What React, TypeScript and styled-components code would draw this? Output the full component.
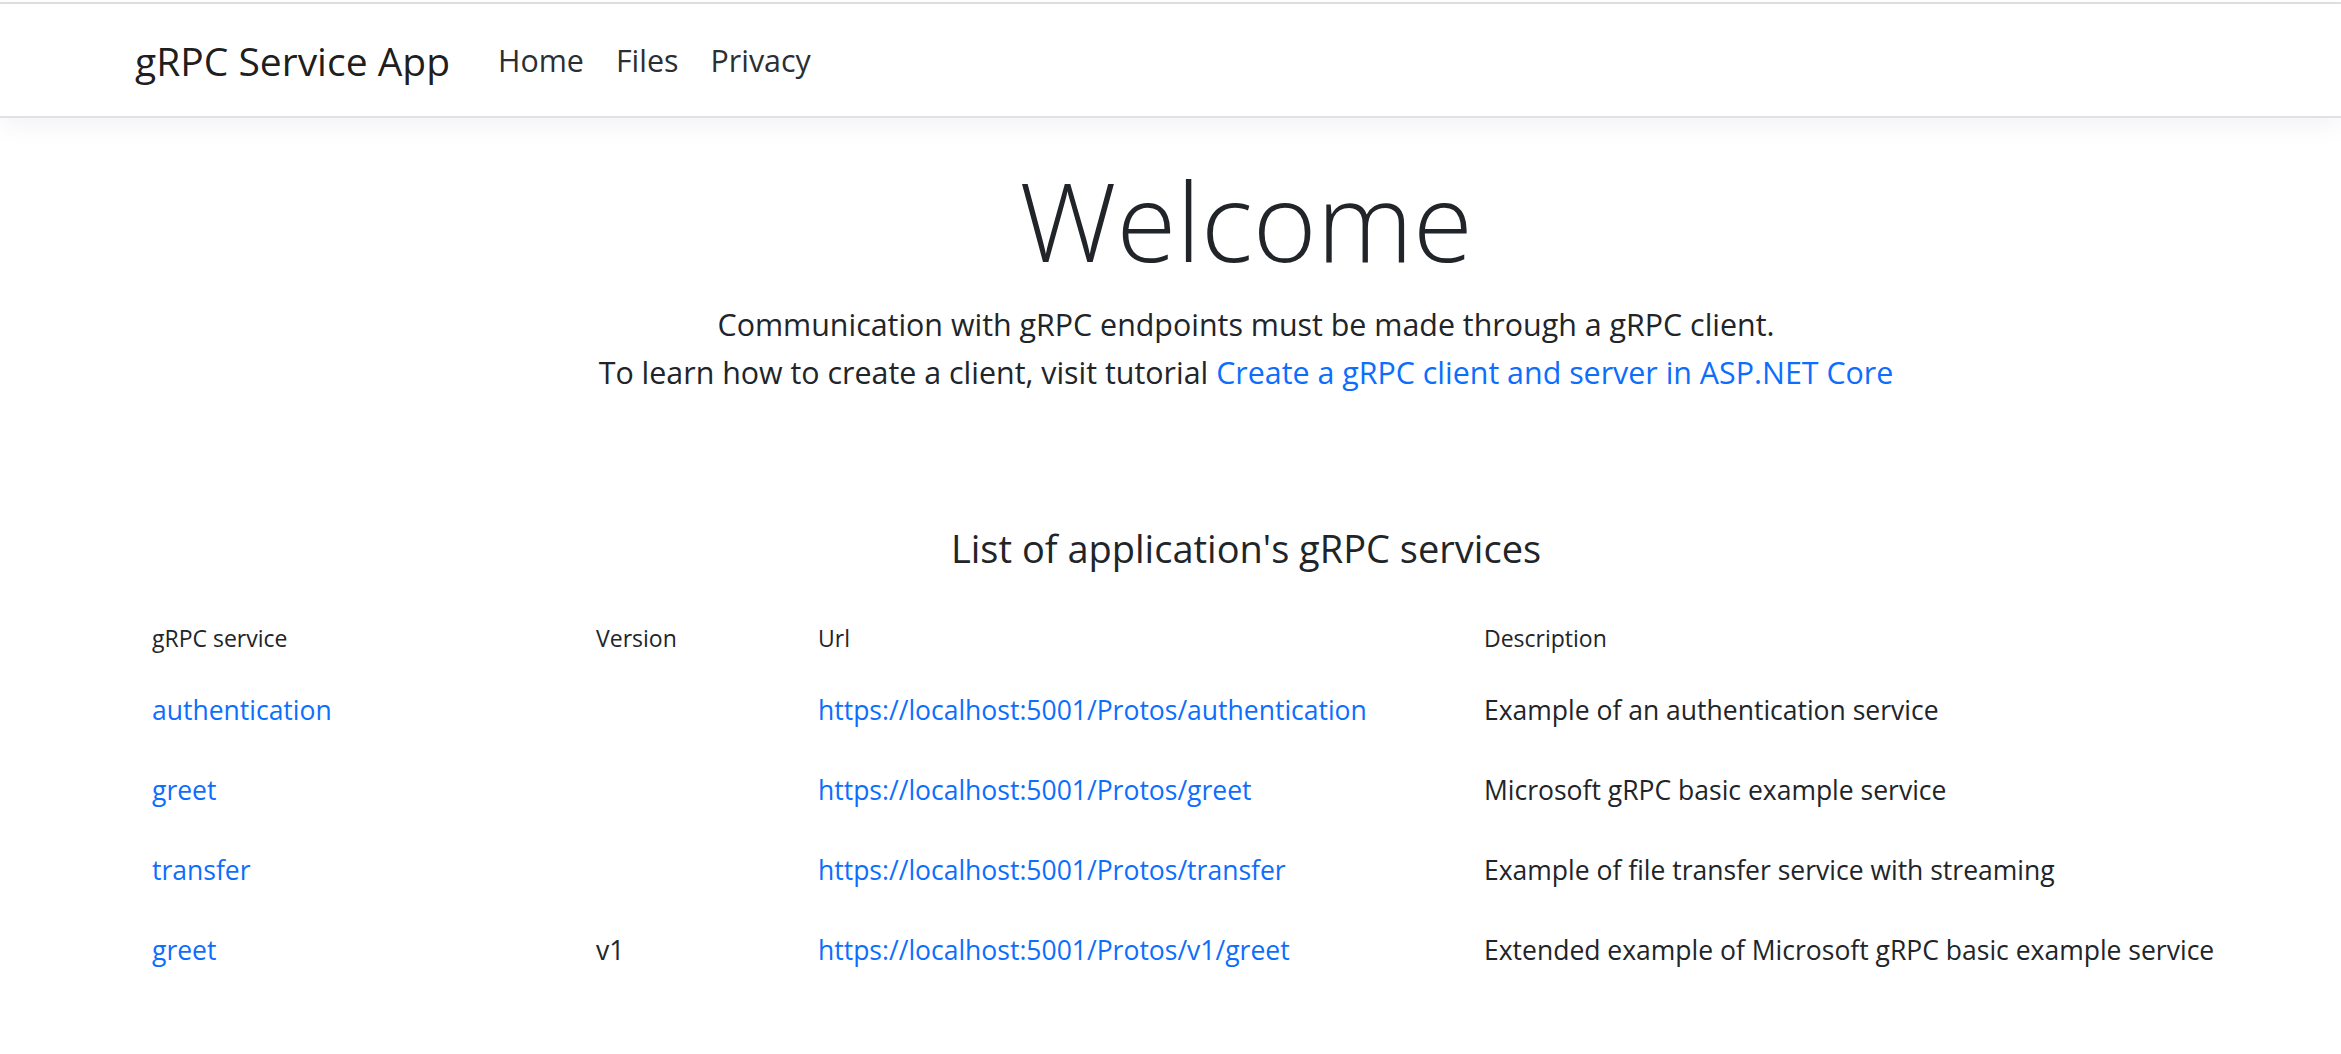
import React from "react";
import styled, { createGlobalStyle } from "styled-components";

const GlobalStyle = createGlobalStyle`
  html, body {
    margin: 0;
    padding: 0;
    background: #ffffff;
    overflow: hidden;
  }
  body {
    font-family: "Open Sans", "Noto Sans", sans-serif;
    color: #212529;
    -webkit-font-smoothing: antialiased;
  }
  *, *::before, *::after { box-sizing: border-box; }
`;

const Page = styled.div`
  width: 2341px;
  min-height: 1054px;
  background: #ffffff;
`;

const TopEdge = styled.div`
  height: 2px;
  margin-top: 2px;
  background: #dedee3;
`;

const Navbar = styled.header`
  position: relative;
  z-index: 1;
  display: flex;
  align-items: center;
  height: 114px;
  padding-left: 135px;
  padding-top: 2px;
  background: #ffffff;
  border-bottom: 2px solid #dee2e6;
  box-shadow: 0 8px 24px rgba(0, 0, 0, 0.05);
`;

const Brand = styled.a`
  font-size: 39px;
  line-height: 60px;
  color: rgba(0, 0, 0, 0.9);
  text-decoration: none;
  margin-right: 32px;
`;

const NavList = styled.nav`
  display: flex;
  align-items: center;
`;

const NavLink = styled.a`
  font-size: 30.4px;
  line-height: 48px;
  padding: 0 16px;
  color: #2b2f33;
  text-decoration: none;
`;

const Main = styled.main`
  padding-left: 136px;
`;

const Hero = styled.section`
  text-align: center;
  padding-left: 15px;
`;

const Title = styled.h1`
  margin: 37px 0 0;
  font-size: 109px;
  font-weight: 350;
  line-height: 1.2;
  color: #212529;
`;

const Lead = styled.p`
  margin: 15px 0 0;
  font-size: 30.4px;
  line-height: 48px;
`;

const Link = styled.a`
  color: #0d6efd;
  text-decoration: none;
`;

const SectionTitle = styled.h5`
  margin: 127px 0 0;
  padding-left: 15px;
  text-align: center;
  font-size: 38px;
  font-weight: 400;
  line-height: 48px;
`;

const Table = styled.table`
  margin-top: 32px;
  width: 100%;
  border-collapse: collapse;
  table-layout: fixed;
`;

const HeadCell = styled.th<{ $w?: number }>`
  width: ${(p) => (p.$w ? `${p.$w}px` : "auto")};
  text-align: left;
  font-size: 23px;
  font-weight: 400;
  line-height: 36px;
  padding: 16px 16px 14px;
  color: #212529;
`;

const Cell = styled.td`
  font-size: 26.5px;
  line-height: 42px;
  padding: 19px 16px;
  color: #212529;
  white-space: nowrap;
`;

type Service = {
  name: string;
  version: string;
  url: string;
  description: string;
};

const services: Service[] = [
  {
    name: "authentication",
    version: "",
    url: "https://localhost:5001/Protos/authentication",
    description: "Example of an authentication service",
  },
  {
    name: "greet",
    version: "",
    url: "https://localhost:5001/Protos/greet",
    description: "Microsoft gRPC basic example service",
  },
  {
    name: "transfer",
    version: "",
    url: "https://localhost:5001/Protos/transfer",
    description: "Example of file transfer service with streaming",
  },
  {
    name: "greet",
    version: "v1",
    url: "https://localhost:5001/Protos/v1/greet",
    description: "Extended example of Microsoft gRPC basic example service",
  },
];

export default function App() {
  return (
    <Page>
      <GlobalStyle />
      <TopEdge />
      <Navbar>
        <Brand href="#">gRPC Service App</Brand>
        <NavList>
          <NavLink href="#">Home</NavLink>
          <NavLink href="#">Files</NavLink>
          <NavLink href="#">Privacy</NavLink>
        </NavList>
      </Navbar>
      <Main>
        <Hero>
          <Title>Welcome</Title>
          <Lead>
            Communication with gRPC endpoints must be made through a gRPC client.
            <br />
            To learn how to create a client, visit tutorial{" "}
            <Link href="#">Create a gRPC client and server in ASP.NET Core</Link>
          </Lead>
        </Hero>
        <SectionTitle>List of application's gRPC services</SectionTitle>
        <Table>
          <thead>
            <tr>
              <HeadCell $w={444}>gRPC service</HeadCell>
              <HeadCell $w={222}>Version</HeadCell>
              <HeadCell $w={666}>Url</HeadCell>
              <HeadCell>Description</HeadCell>
            </tr>
          </thead>
          <tbody>
            {services.map((s, i) => (
              <tr key={i}>
                <Cell>
                  <Link href="#">{s.name}</Link>
                </Cell>
                <Cell>{s.version}</Cell>
                <Cell>
                  <Link href="#">{s.url}</Link>
                </Cell>
                <Cell>{s.description}</Cell>
              </tr>
            ))}
          </tbody>
        </Table>
      </Main>
    </Page>
  );
}
